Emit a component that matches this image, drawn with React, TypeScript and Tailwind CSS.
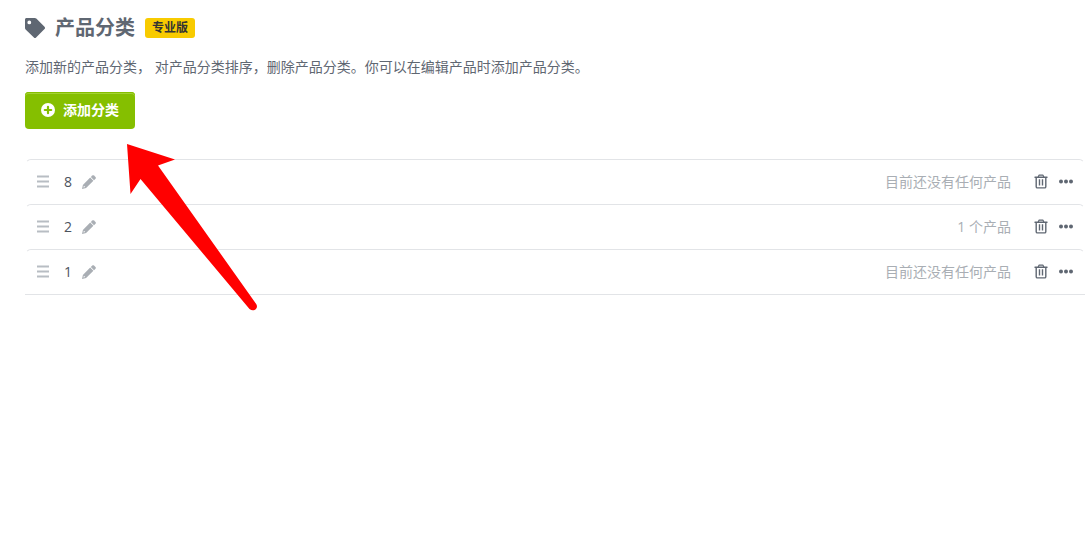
import React from 'react';

interface Category {
  id: number;
  name: string;
  summary: string;
}

const categories: Category[] = [
  { id: 1, name: '8', summary: '目前还没有任何产品' },
  { id: 2, name: '2', summary: '1 个产品' },
  { id: 3, name: '1', summary: '目前还没有任何产品' },
];

const TagIcon = () => (
  <svg className="h-5 w-5" viewBox="0 0 20 20" fill="currentColor" aria-hidden="true">
    <path
      fillRule="evenodd"
      d="M1.5 0H9.8c.6 0 1.1.2 1.5.6l8.200 8.200c.7.7.7 1.500 0 2.200l-8.400 8.400c-.7.7-1.500.7-2.200 0L.6 11.500C.2 11.100 0 10.600 0 10V1.500C0 .7.7 0 1.500 0zM4.300 2.500a1.900 1.900 0 1 0 0 3.800 1.900 1.900 0 0 0 0-3.800z"
    />
  </svg>
);

const PlusCircleIcon = () => (
  <svg className="h-3.5 w-3.5" viewBox="0 0 14 14" aria-hidden="true">
    <circle cx="7" cy="7" r="7" fill="#ffffff" />
    <path d="M7 3.800v6.400M3.800 7h6.400" stroke="#85bf00" strokeWidth="2.200" strokeLinecap="round" />
  </svg>
);

const HandleIcon = () => (
  <svg className="h-[13px] w-3" viewBox="0 0 12 13" fill="currentColor" aria-hidden="true">
    <path d="M0 .5h12v2H0zM0 5.500h12v2H0zM0 10.500h12v2H0z" />
  </svg>
);

const PencilIcon = () => (
  <svg className="h-3.5 w-3.5" viewBox="0 0 14 14" fill="currentColor" aria-hidden="true">
    <path d="M10.300.5c.5-.5 1.200-.5 1.700 0L13.500 2c.5.5.5 1.200 0 1.700l-1.500 1.500L8.800 2z" />
    <path
      fillRule="evenodd"
      d="M8.200 2.600l3.200 3.200-7.300 7.300L0 14l.9-4.100zM1.900 10.800l-.5 1.800 1.800-.5z"
    />
  </svg>
);

const TrashIcon = () => (
  <svg className="h-[15px] w-3.5" viewBox="0 0 14 15" fill="none" stroke="currentColor" aria-hidden="true">
    <path d="M1 3.200h12" strokeWidth="1.400" strokeLinecap="round" />
    <path d="M4.200 3L5 1.200h4L9.800 3" strokeWidth="1.200" strokeLinejoin="round" />
    <path d="M2.200 3.500v9.200c0 .7.5 1.200 1.200 1.200h7.200c.7 0 1.200-.5 1.200-1.200V3.500" strokeWidth="1.400" />
    <path d="M5.500 5.200v6.300M8.500 5.200v6.300" strokeWidth="1.400" />
  </svg>
);

const DotsIcon = () => (
  <svg className="h-[5px] w-3.5" viewBox="0 0 14 5" fill="currentColor" aria-hidden="true">
    <circle cx="2" cy="2.500" r="2" />
    <circle cx="7" cy="2.500" r="2" />
    <circle cx="12" cy="2.500" r="2" />
  </svg>
);

const CategoryRow: React.FC<{ category: Category }> = ({ category }) => (
  <li className="flex h-[45px] items-center rounded-md border border-x-transparent border-b-transparent border-t-[#e2e4e7] px-[11px] text-sm">
    <button type="button" aria-label="拖动排序" className="text-[#b8bdc3]">
      <HandleIcon />
    </button>
    <span className="ml-[15px] text-[#4c535d]">{category.name}</span>
    <button type="button" aria-label="编辑名称" className="ml-2.5 text-[#a9aeb4]">
      <PencilIcon />
    </button>
    <span className="ml-auto text-[#a9aeb4]">{category.summary}</span>
    <button type="button" aria-label="删除" className="ml-[23px]">
      <TrashIcon />
    </button>
    <button type="button" aria-label="更多" className="ml-[11px] py-2">
      <DotsIcon />
    </button>
  </li>
);

const App: React.FC = () => {
  return (
    <main className="relative min-h-screen bg-white pt-4 pr-[7px] pl-[25px] font-['Open_Sans','Noto_Sans_CJK_SC',sans-serif] text-[#5f6772]">
      <header className="flex h-6 items-center">
        <TagIcon />
        <h1 className="ml-2.5 text-xl leading-6 font-bold">产品分类</h1>
        <span className="ml-2.5 flex h-5 items-center rounded-[3px] bg-[#f8cb00] px-[7px] text-xs font-bold text-[#333333]">
          专业版
        </span>
      </header>

      <p className="mt-[17px] text-sm leading-5">
        添加新的产品分类， 对产品分类排序，删除产品分类。你可以在编辑产品时添加产品分类。
      </p>

      <button
        type="button"
        className="mt-[15px] flex h-[37px] items-center gap-2 rounded bg-[#85bf00] px-4 pb-0.5 text-sm font-bold text-white shadow-[inset_0_1px_0_#85bf00,inset_0_2px_0_#a3d133]"
      >
        <PlusCircleIcon />
        添加分类
      </button>

      <ul className="mt-[30px] border-b border-[#e2e4e7]">
        {categories.map((category) => (
          <CategoryRow key={category.id} category={category} />
        ))}
      </ul>

      {/* Pointer to the add button */}
      <svg
        className="pointer-events-none absolute top-36 left-[127px] h-[167px] w-[131px]"
        viewBox="0 0 131 167"
        fill="#ff0000"
        aria-hidden="true"
      >
        <path d="M0 0L48 15.500L31 21.500L129.200 160C132 164.500 126.500 168.500 122.500 165L13.500 35L3.500 50Z" />
      </svg>
    </main>
  );
};

export default App;
